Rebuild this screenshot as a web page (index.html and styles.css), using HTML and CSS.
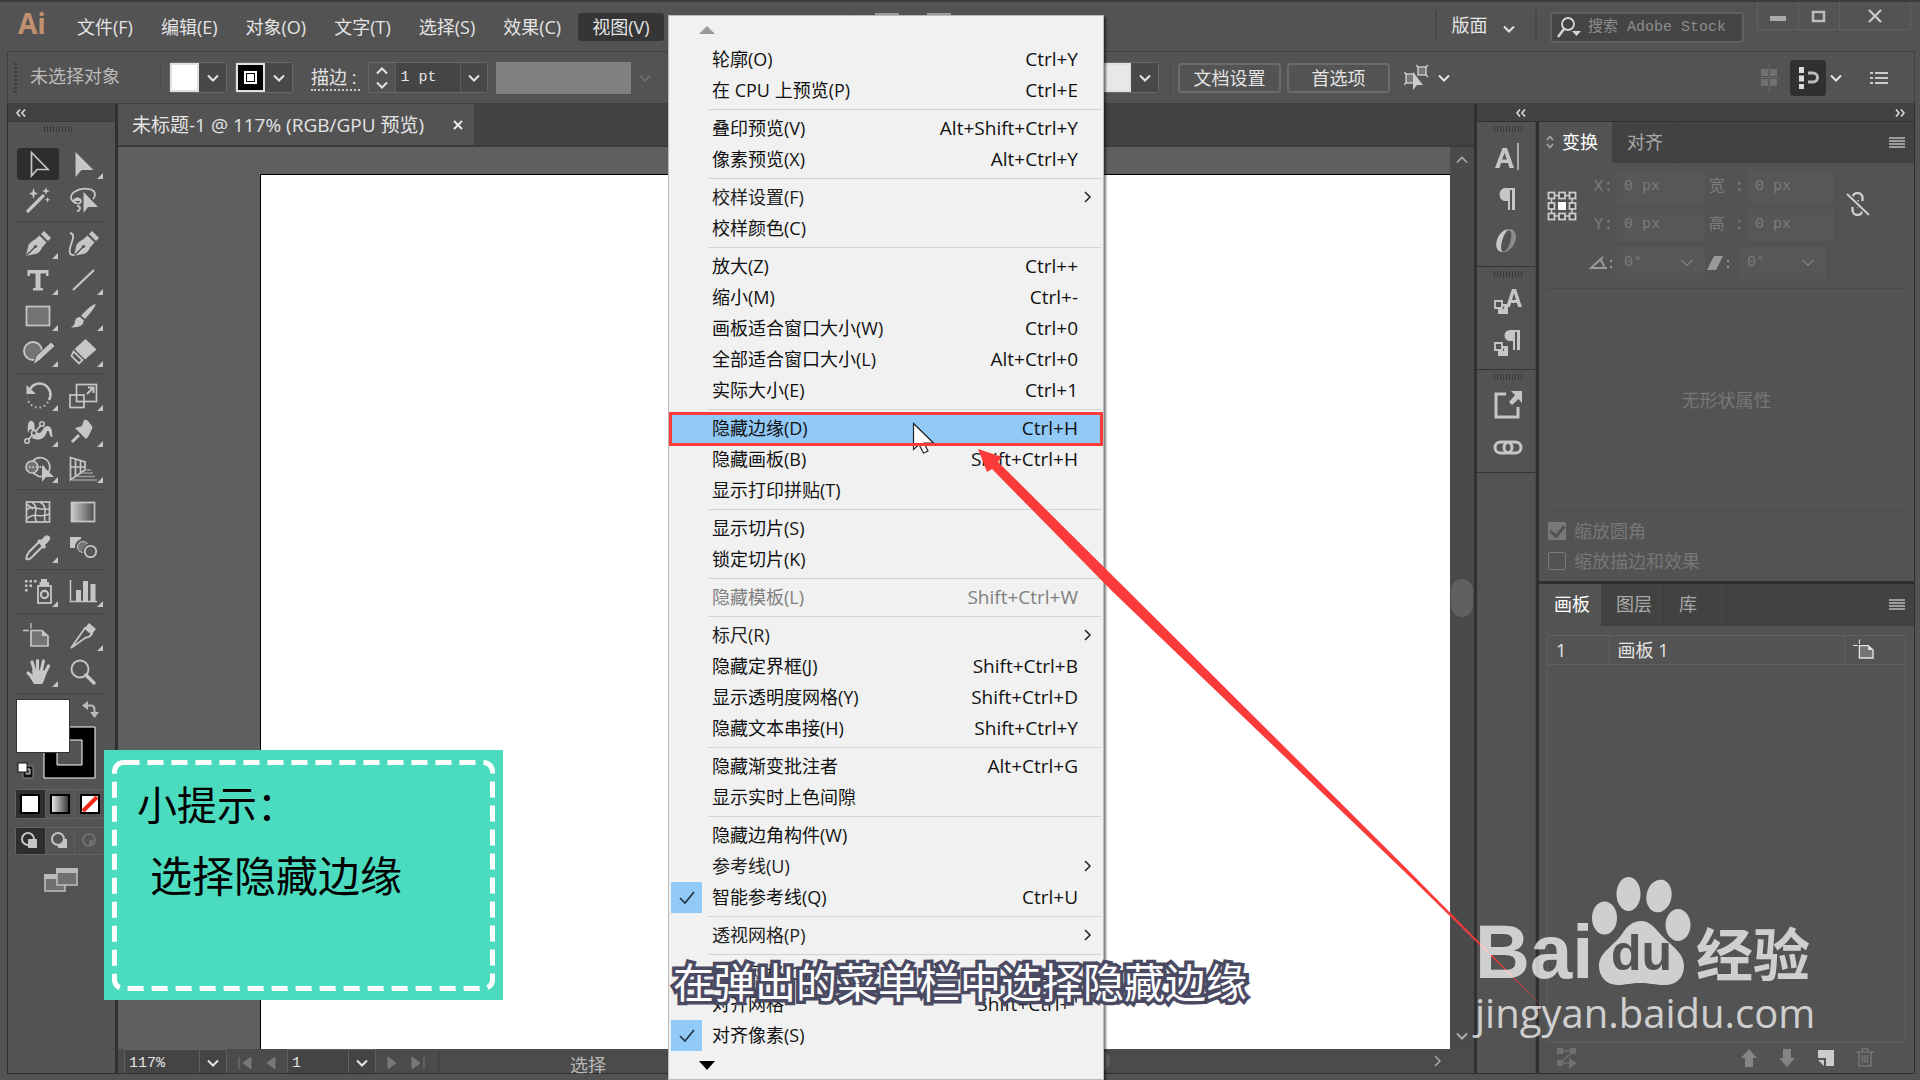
FILE: index.html
```html
<!DOCTYPE html>
<html lang="zh-CN">
<head>
<meta charset="utf-8">
<title>Ai</title>
<link rel="stylesheet" href="styles.css">
</head>
<body>
<svg class="defs" aria-hidden="true">
  <symbol id="chev" viewBox="0 0 12 8"><path d="M1 1.500L6 6.500L11 1.500" fill="none" stroke="currentColor" stroke-width="2"/></symbol>
  <symbol id="chev-right" viewBox="0 0 8 12"><path d="M1 1L6 6L1 11" fill="none" stroke="currentColor" stroke-width="1.500"/></symbol>
  <symbol id="dbl" viewBox="0 0 10 8"><path d="M4 0.500L1 4L4 7.500M9 0.500L6 4L9 7.500" fill="none" stroke="currentColor" stroke-width="1.600"/></symbol>
  <symbol id="list" viewBox="0 0 16 12"><path d="M0 1H16M0 4H16M0 7H16M0 10H16" stroke="currentColor" stroke-width="1.500"/></symbol>
  <symbol id="check" viewBox="0 0 16 14"><path d="M1 7L6 12L15 1" fill="none" stroke="currentColor" stroke-width="1.700"/></symbol>
  <symbol id="nib" viewBox="0 0 30 30"><path d="M3 27L5.500 16Q7 13 12 10.500L16.500 6.500L23.500 13.500L19.500 18Q17 23 14 24.500Z" fill="currentColor"/><path d="M18 5L21 2L28 9L25 12Z" fill="currentColor"/><path d="M3.500 26.500L12 18" stroke="#535353" stroke-width="1.500"/><circle cx="12.500" cy="17.500" r="1.600" fill="#535353"/></symbol>
  <symbol id="board" viewBox="0 0 30 30"><path d="M8 9.500H19L25 15V25H8Z" fill="#757575" stroke="currentColor" stroke-width="1.700"/><path d="M19 9V15H25Z" fill="currentColor"/><path d="M0 9.500H6M8 2V7.500" stroke="currentColor" stroke-width="1.300"/></symbol>
</svg>
<div class="app">
  <header class="titlebar">
    <span class="logo">Ai</span>
    <nav class="menubar">
      <button>文件(F)</button><button>编辑(E)</button><button>对象(O)</button><button>文字(T)</button><button>选择(S)</button><button>效果(C)</button><button class="open">视图(V)</button>
    </nav>
    <div class="behind" aria-hidden="true"><i></i><b></b><b></b></div>
    <button class="layout-switch">版面<svg width="12" height="8"><use href="#chev"/></svg></button>
    <label class="search">
      <svg width="26" height="26" viewBox="0 0 26 26"><circle cx="12" cy="9" r="6" fill="none" stroke="#d5d5d5" stroke-width="1.800"/><path d="M8 14L2 22" stroke="#d5d5d5" stroke-width="2.500"/><path d="M16 16H25L20.500 21Z" fill="#d5d5d5"/></svg>
      <input type="text" placeholder="搜索 Adobe Stock" aria-label="搜索">
    </label>
    <div class="wincontrols">
      <button aria-label="最小化"><svg width="16" height="14"><path d="M0 7H16V12H0Z" fill="#aaa"/></svg></button>
      <button aria-label="最大化"><svg width="16" height="14"><rect x="2" y="3" width="11" height="9" fill="none" stroke="#bbb" stroke-width="2.500"/></svg></button>
      <button class="close" aria-label="关闭"><svg width="16" height="14"><path d="M2 1L14 13M14 1L2 13" stroke="#ccc" stroke-width="2.200"/></svg></button>
    </div>
  </header>

  <section class="controlbar">
    <i class="dots"></i>
    <span class="state">未选择对象</span>
    <button class="combo" aria-label="填色"><i class="sw white"></i><span class="arrow"><svg width="12" height="8"><use href="#chev"/></svg></span></button>
    <button class="combo" aria-label="描边颜色"><i class="sw black"></i><span class="arrow"><svg width="12" height="8"><use href="#chev"/></svg></span></button>
    <label class="stroke-label" for="weight">描边 :</label>
    <div class="stepper">
      <button class="spin" aria-label="步进"><svg width="12" height="8" viewBox="0 0 12 8"><path d="M1 6.500L6 1.500L11 6.500" fill="none" stroke="currentColor" stroke-width="2"/></svg><svg width="12" height="8"><use href="#chev"/></svg></button>
      <input id="weight" type="text" value="1 pt">
      <button class="arrow" aria-label="粗细"><svg width="12" height="8"><use href="#chev"/></svg></button>
    </div>
    <i class="profile"></i>
    <svg class="dimchev" width="12" height="8"><use href="#chev"/></svg>
    <div class="right-controls">
      <button class="combo style" aria-label="样式"><i class="sw pale"></i><span class="arrow"><svg width="12" height="8"><use href="#chev"/></svg></span></button>
      <i class="rule"></i>
      <button class="plain">文档设置</button>
      <button class="plain">首选项</button>
      <button class="ghost similar" aria-label="选择类似"><svg width="26" height="28" viewBox="0 0 26 28"><g fill="#777" stroke="#c4c4c4" stroke-width="1.500"><rect x="2" y="10" width="8" height="9"/><rect x="14" y="3" width="8" height="8"/></g><path d="M0 8l3 3M0 21l3-3M12 1l3 3M24 1l-3 3M24 13l-3-3" stroke="#c4c4c4" stroke-width="1.500"/><path d="M9 8V26L13 21H19Z" fill="#ccc"/></svg><svg width="12" height="8"><use href="#chev"/></svg></button>
    </div>
    <div class="snap">
      <svg width="22" height="30" viewBox="0 0 22 30"><g fill="#707070"><rect x="3" y="6" width="7" height="7"/><rect x="12" y="6" width="7" height="7"/><rect x="3" y="16" width="7" height="7"/><rect x="12" y="16" width="7" height="7"/></g><path d="M11 0V30M0 14.500H22" stroke="#666"/></svg>
      <button class="snap-on" aria-label="对齐"><svg width="24" height="24" viewBox="0 0 24 24"><path d="M5.500 1V23" stroke="#ddd" stroke-width="5" stroke-dasharray="6 2.500"/><path d="M12 7H17A4 4 0 0 1 17 16H12" fill="none" stroke="#bbb" stroke-width="3"/></svg></button>
      <svg width="12" height="8"><use href="#chev"/></svg>
      <button class="ghost options" aria-label="选项"><svg width="18" height="14" viewBox="0 0 18 14"><path d="M0 2H3M5 2H18M0 7H3M5 7H18M0 12H3M5 12H18" stroke="#ccc" stroke-width="2"/></svg></button>
    </div>
  </section>

  <main class="workspace">
    <aside class="toolbar">
      <div class="dockhead"><svg width="10" height="8"><use href="#dbl"/></svg></div>
      <i class="grip"></i>
      <div class="tools">
        <button class="tool on" aria-label="选择"><svg viewBox="0 0 30 30"><path d="M8.500 3.500V27L14 20.500H25Z" fill="none" stroke="currentColor" stroke-width="1.700"/></svg></button>
        <button class="tool more" aria-label="直接选择"><svg viewBox="0 0 30 30"><path d="M7.500 3V28L13.500 21H25.500Z" fill="currentColor"/></svg></button>
        <button class="tool" aria-label="魔棒"><svg viewBox="0 0 30 30"><path d="M5 26L20 11" stroke="currentColor" stroke-width="3.200" stroke-linecap="round"/><path d="M10.500 3l1.300 4.200L15 8.500l-3.200 1.300L10.500 14l-1.300-4.200L6 8.500l3.200-1.300ZM23 2l1 3 3 1-3 1-1 3-1-3-3-1 3-1ZM24.500 12l.8 2 2 .8-2 .8-.8 2-.8-2-2-.8 2-.8Z" fill="currentColor"/></svg></button>
        <button class="tool" aria-label="套索"><svg viewBox="0 0 30 30"><path d="M9 18C2 17 1 10 7 6.500C14 2 27 3 27 9.500C27 12 26 13 25 14M9 18C5 19 5 14 9 13.500C14 13 14 19 9.500 18.500M9 21C13 21 13 25 9 26.500M6 15h7" fill="none" stroke="currentColor" stroke-width="1.800"/><path d="M15.500 7V28L20 22H30Z" fill="currentColor"/></svg></button>
      </div>
      <div class="tools">
        <button class="tool more" aria-label="钢笔"><svg viewBox="0 0 30 30"><use href="#nib"/></svg></button>
        <button class="tool" aria-label="曲率"><svg viewBox="0 0 30 30"><path d="M2 4C8 5 4 12 2.500 17C1 23 1 27 7 26" fill="none" stroke="currentColor" stroke-width="1.800"/><use href="#nib" x="3"/></svg></button>
        <button class="tool more" aria-label="文字"><svg viewBox="0 0 30 30"><path d="M4.500 5H25.500V11H23V8.500H17.500V23H20V25.500H10V23H12.500V8.500H7V11H4.500Z" fill="currentColor"/></svg></button>
        <button class="tool more" aria-label="直线"><svg viewBox="0 0 30 30"><path d="M5 25L26 5" stroke="currentColor" stroke-width="2.200"/></svg></button>
        <button class="tool more" aria-label="矩形"><svg viewBox="0 0 30 30"><rect x="3.500" y="5.500" width="23" height="19" fill="#747474" stroke="currentColor" stroke-width="1.700"/></svg></button>
        <button class="tool more" aria-label="画笔"><svg viewBox="0 0 30 30"><path d="M27.500 3Q28 6 17 18L13 14.500Q24 3 27.500 3ZM12 16L16 19.500Q15 27 3 26.500Q7 24 7 20Q8 16 12 16Z" fill="currentColor"/></svg></button>
        <button class="tool more" aria-label="Shaper"><svg viewBox="0 0 30 30"><circle cx="10" cy="14" r="9" fill="#747474" stroke="currentColor" stroke-width="1.900"/><path d="M10 28L13 19L28 5L32 9L17 23Z" fill="currentColor" stroke="#535353"/></svg></button>
        <button class="tool more" aria-label="橡皮擦"><svg viewBox="0 0 30 30"><path d="M17.500 2L28.500 12.500L17 22.500L6.500 12Z" fill="currentColor"/><path d="M5.500 14.500L14.500 23L11 26.500L3.500 19Z" fill="none" stroke="currentColor" stroke-width="1.800"/></svg></button>
      </div>
      <div class="tools">
        <button class="tool more" aria-label="旋转"><svg viewBox="0 0 30 30"><path d="M7 8A10.500 10.500 0 0 1 26 19" fill="none" stroke="currentColor" stroke-width="2.500"/><path d="M3.500 4V13H13Z" fill="currentColor"/><path d="M25 21A11 11 0 0 1 4.500 17" fill="none" stroke="currentColor" stroke-width="2" stroke-dasharray="1.500 3"/></svg></button>
        <button class="tool more" aria-label="比例缩放"><svg viewBox="0 0 30 30"><rect x="8.500" y="3.500" width="20" height="17" fill="none" stroke="currentColor" stroke-width="1.700"/><rect x="2" y="14" width="14" height="12.500" fill="none" stroke="currentColor" stroke-width="1.700"/><path d="M19 13L25 7M20 6.500H25.500V12" fill="none" stroke="currentColor" stroke-width="2"/></svg></button>
        <button class="tool more" aria-label="宽度"><svg viewBox="0 0 30 30"><path d="M5 16C4 6 6 3 9 4C14 6 9 14 15 16C20 17 19 9 25 9C31 11 28 18 30 20C25 20 28 13 24 14C22 23 15 24 9 21C12 14 8 8 5 16Z" fill="currentColor"/><path d="M5 23L19 7" stroke="currentColor" stroke-width="1.800"/><g fill="#535353" stroke="currentColor" stroke-width="1.600"><circle cx="4" cy="24" r="2.200"/><circle cx="11" cy="16" r="2.500"/><circle cx="19" cy="7" r="2.200"/></g></svg></button>
        <button class="tool more" aria-label="操控变形"><svg viewBox="0 0 30 30"><path d="M16 3Q18 2 20 4L24 9Q25 11 23.500 13L20 20L18 22L13 17L9 13L7 11L14 9Z" fill="currentColor"/><path d="M11 18L4 25" stroke="currentColor" stroke-width="3"/></svg></button>
        <button class="tool more" aria-label="形状生成器"><svg viewBox="0 0 30 30"><circle cx="9" cy="14" r="6" fill="#747474" stroke="currentColor" stroke-width="1.700"/><path d="M10 8A9.500 9.500 0 1 1 16 23.500L10 20" fill="none" stroke="currentColor" stroke-width="1.700"/><path d="M6 14H22" stroke="currentColor" stroke-width="2" stroke-dasharray="1.500 2"/><path d="M19 12V29L23 24H31Z" fill="currentColor"/></svg></button>
        <button class="tool more" aria-label="透视网格"><svg viewBox="0 0 30 30"><path d="M2.500 4.500L17 9V17L2.500 27ZM7.500 6V24M12.500 7.500V20M2.500 14H17" fill="none" stroke="currentColor" stroke-width="1.700"/><path d="M17 17H23M13 20H25M9 23.500H27M4 27H29" stroke="#999" stroke-width="1.500"/></svg></button>
      </div>
      <div class="tools">
        <button class="tool" aria-label="网格"><svg viewBox="0 0 30 30"><rect x="3.500" y="5" width="23" height="20" fill="none" stroke="currentColor" stroke-width="1.700"/><path d="M3.500 13C10 7 14 14 26 12M3.500 22C12 14 17 22 26 17M9 5C18 12 8 18 14 25M17 5C26 10 20 18 22 25M3.500 7L10 12" fill="none" stroke="currentColor" stroke-width="1.600"/></svg></button>
        <button class="tool" aria-label="渐变"><svg viewBox="0 0 30 30"><defs><linearGradient id="gr"><stop stop-color="#ccc"/><stop offset="1" stop-color="#4c4c4c"/></linearGradient></defs><rect x="3.500" y="5.500" width="23" height="19" fill="url(#gr)" stroke="currentColor" stroke-width="1.700"/></svg></button>
        <button class="tool more" aria-label="吸管"><svg viewBox="0 0 30 30"><path d="M16 9L6 19Q3 23 3.500 26Q7 27 10 23L20 13" fill="none" stroke="currentColor" stroke-width="2"/><path d="M14 8L17 6L18 7L22 3Q25 1 27 4Q28 6 25 9L22 12L23 14L21 16Z" fill="currentColor"/></svg></button>
        <button class="tool" aria-label="混合"><svg viewBox="0 0 30 30"><path d="M2 4H13V15H2Z" fill="currentColor"/><circle cx="15" cy="14" r="6.500" fill="#777" stroke="#535353" stroke-width="3"/><circle cx="15" cy="14" r="5.500" fill="#777" stroke="currentColor"/><circle cx="22.500" cy="18.500" r="6" fill="#555" stroke="#535353" stroke-width="4"/><circle cx="22.500" cy="18.500" r="5.700" fill="none" stroke="currentColor" stroke-width="1.800"/></svg></button>
      </div>
      <div class="tools">
        <button class="tool more" aria-label="符号喷枪"><svg viewBox="0 0 30 30"><path d="M2 3h2.500v2.500H2zM6.500 3H9v2.500H6.500zM11 3h2.500v2.500H11zM2 7.500h2.500V10H2zM6.500 7.500H9V10H6.500zM2 12h2.500v2.500H2z" fill="currentColor"/><rect x="15" y="9" width="13" height="17" fill="none" stroke="currentColor" stroke-width="1.800"/><path d="M16.500 9V5H18V2H24V5H26V9Z" fill="currentColor"/><circle cx="21.500" cy="17.500" r="3.600" fill="none" stroke="currentColor" stroke-width="2.200"/></svg></button>
        <button class="tool more" aria-label="柱形图"><svg viewBox="0 0 30 30"><path d="M2.500 3V24.500H29" fill="none" stroke="currentColor" stroke-width="1.500"/><path d="M8 13H13V24H8ZM15 4H20V24H15ZM22.500 7H27.500V24H22.500Z" fill="currentColor"/></svg></button>
      </div>
      <div class="tools">
        <button class="tool" aria-label="画板"><svg viewBox="0 0 30 30"><use href="#board"/></svg></button>
        <button class="tool more" aria-label="切片"><svg viewBox="0 0 30 30"><path d="M17 7L24 13Q22 16 17 17L3 27Z" fill="none" stroke="currentColor" stroke-width="1.800"/><path d="M17 7L21 2L28 8L24 13Z" fill="currentColor"/></svg></button>
        <button class="tool more" aria-label="抓手"><svg viewBox="0 0 30 30"><path d="M9 5L12 15M14.500 3.500V15M20.500 4L18 15M25.500 9L21 18M5 16L12 22" stroke="currentColor" stroke-width="3.200" stroke-linecap="round"/><path d="M9 13H21L23 17Q21 25 19 27H11L6 19L10 20Z" fill="currentColor"/></svg></button>
        <button class="tool" aria-label="缩放"><svg viewBox="0 0 30 30"><circle cx="12" cy="12" r="8.500" fill="none" stroke="currentColor" stroke-width="1.900"/><path d="M18 18L26 26" stroke="currentColor" stroke-width="3.500" stroke-linecap="round"/></svg></button>
      </div>
      <svg class="fillstroke" width="90" height="90" viewBox="0 0 90 90"><path d="M29 29H80V80H29Z" fill="#000" stroke="#fff"/><path d="M42 42H67V67H42Z" fill="#535353" stroke="#fff"/><rect x="1.500" y="1.500" width="53" height="53" fill="#fff" stroke="#333"/><path d="M72 7.500H76Q79.500 7.500 79.500 12V14" fill="none" stroke="#bbb" stroke-width="2"/><path d="M67 7.500L73 3V12ZM75 14H84L79.500 20Z" fill="#bbb"/><path d="M8 68H18V80H8Z" fill="#111" stroke="#888"/><path d="M11 71H15V76H11Z" fill="#555" stroke="#ccc"/><rect x="3" y="65" width="9" height="9" fill="#fff" stroke="#111"/></svg>
      <div class="modes">
        <button class="on" aria-label="颜色"><svg width="20" height="20"><rect x="1" y="1" width="18" height="18" fill="#fff" stroke="#000" stroke-width="2"/></svg></button>
        <button aria-label="渐变填充"><svg width="20" height="20"><defs><linearGradient id="g2"><stop stop-color="#eee"/><stop offset="1" stop-color="#333"/></linearGradient></defs><rect x="1" y="1" width="18" height="18" fill="url(#g2)" stroke="#000" stroke-width="2"/></svg></button>
        <button aria-label="无"><svg width="20" height="20"><rect x="1" y="1" width="18" height="18" fill="#fff" stroke="#000" stroke-width="2"/><path d="M3 17L17 3" stroke="#f02818" stroke-width="4"/></svg></button>
      </div>
      <div class="modes draw">
        <button class="on" aria-label="正常绘图"><svg width="18" height="18"><circle cx="7" cy="7" r="6" fill="none" stroke="#c4c4c4" stroke-width="2"/><rect x="7" y="7" width="9" height="9" fill="#c4c4c4"/></svg></button>
        <button aria-label="背面绘图"><svg width="18" height="18"><rect x="7" y="7" width="9" height="9" fill="#c4c4c4"/><circle cx="7" cy="7" r="6" fill="#555" stroke="#c4c4c4" stroke-width="2"/></svg></button>
        <button aria-label="内部绘图"><svg width="18" height="18"><circle cx="8" cy="8" r="6" fill="none" stroke="#707070" stroke-width="2"/><path d="M8 8H13L11 13H8Z" fill="#707070"/></svg></button>
      </div>
      <button class="screenmode" aria-label="屏幕模式"><svg width="36" height="26" viewBox="0 0 36 26"><rect x="2" y="8" width="20" height="16" fill="#707070" stroke="#bbb" stroke-width="1.600"/><path d="M1 7H14V12H1Z" fill="#bbb"/><rect x="14" y="2" width="20" height="16" fill="#707070" stroke="#bbb" stroke-width="1.600"/><path d="M13 1H35V6H13Z" fill="#bbb"/></svg></button>
    </aside>

    <section class="document">
      <div class="doctabs"><button class="doctab">未标题-1 @ 117% (RGB/GPU 预览)<svg width="10" height="10"><path d="M1 1L9 9M9 1L1 9" stroke="#eee" stroke-width="1.800"/></svg></button></div>
      <div class="view">
        <div class="canvas"><div class="artboard"></div></div>
        <div class="vscroll"><svg width="12" height="8" viewBox="0 0 12 8"><path d="M1 6.500L6 1.500L11 6.500" fill="none" stroke="currentColor" stroke-width="1.700"/></svg><i></i><svg width="12" height="8"><use href="#chev"/></svg></div>
      </div>
      <footer class="statusbar">
        <div class="field"><input type="text" value="117%" aria-label="缩放比例"><button aria-label="缩放列表"><svg width="12" height="8"><use href="#chev"/></svg></button></div>
        <svg class="nav" width="40" height="16"><path d="M2 2V14M14 2L6 8L14 14ZM38 2L30 8L38 14Z" fill="#787878" stroke="#787878"/></svg>
        <div class="field board"><input type="text" value="1" aria-label="画板编号"><button aria-label="画板列表"><svg width="12" height="8"><use href="#chev"/></svg></button></div>
        <svg class="nav" width="40" height="16"><path d="M2 2L10 8L2 14ZM26 2L34 8L26 14ZM38 2V14" fill="#787878" stroke="#787878"/></svg>
        <i class="rule"></i>
        <span class="hint">选择</span>
        <div class="hscroll"><i></i><svg width="8" height="12"><use href="#chev-right"/></svg></div>
      </footer>
    </section>

    <section class="docks">
      <div class="dockhead"><svg width="10" height="8"><use href="#dbl"/></svg><svg class="flip" width="10" height="8"><use href="#dbl"/></svg></div>
      <div class="dockrow">
        <aside class="icondock">
          <div class="group"><i class="grip"></i>
            <button aria-label="字符"><svg viewBox="0 0 30 30"><path d="M2 26L9.500 6H14L21 26H16.500L15 21H8L6.500 26ZM9.200 17.500H13.800L11.500 11Z" fill="currentColor"/><path d="M25 1V28" stroke="currentColor" stroke-width="1.500"/></svg></button>
            <button aria-label="段落"><svg viewBox="0 0 30 30"><path d="M22 4H11A7 7 0 0 0 11 17H15V26H17V6H19V26H22Z" fill="currentColor"/></svg></button>
            <button aria-label="OpenType"><svg viewBox="0 0 30 30"><defs><linearGradient id="og"><stop offset=".45" stop-color="#c8c8c8"/><stop offset=".6" stop-color="#8c8c8c"/></linearGradient></defs><path d="M17 3C6 2 -1 20 6 25C16 31 29 12 20 4Q19 3 17 3ZM16 4.500C19 5 19 9 17 17C14 26 10 27 9 25C6 22 11 4 16 4.500Z" fill="url(#og)"/></svg></button>
          </div>
          <div class="group"><i class="grip"></i>
            <button aria-label="字符样式"><svg viewBox="0 0 30 30"><path d="M13 20L19 2H23L29 20H25L24 16H18L17 20ZM19 13H23L21 6Z" fill="currentColor"/><path d="M5 17H15V27H5Z" fill="currentColor"/><path d="M2 14H9V21H2ZM12 18V23H7" fill="#535353" stroke="currentColor" stroke-width="1.800"/></svg></button>
            <button aria-label="段落样式"><svg viewBox="0 0 30 30"><path d="M27 1H17A5.500 5.500 0 0 0 17 12H20V21H22V3H24V21H27Z" fill="currentColor"/><path d="M5 17H15V27H5Z" fill="currentColor"/><path d="M2 14H9V21H2ZM12 18V23H7" fill="#535353" stroke="currentColor" stroke-width="1.800"/></svg></button>
          </div>
          <div class="group"><i class="grip"></i>
            <button aria-label="资源导出"><svg viewBox="0 0 30 30"><path d="M13 4H3V27H25V17" fill="none" stroke="currentColor" stroke-width="3"/><path d="M18 1H29V13L25.500 9L19 15L16 12L22 5Z" fill="currentColor"/></svg></button>
            <button aria-label="链接"><svg viewBox="0 0 30 30"><rect x="2" y="10" width="17" height="11" rx="5.500" fill="none" stroke="currentColor" stroke-width="3"/><rect x="11" y="10" width="17" height="11" rx="5.500" fill="none" stroke="currentColor" stroke-width="3"/></svg></button>
          </div>
        </aside>
        <div class="panels">
          <section class="panel transform">
            <div class="tabs"><button class="active"><svg width="8" height="14"><path d="M1 5L4 1.500L7 5M1 9L4 12.500L7 9" fill="none" stroke="#aaa" stroke-width="1.500"/></svg>变换</button><button>对齐</button><svg class="pmenu" width="16" height="12"><use href="#list"/></svg></div>
            <div class="xform">
              <svg class="refpoint" width="30" height="30" viewBox="0 0 30 30"><path d="M8 4.500H22M8 25H22M4.500 8V22M25 8V22" stroke="#ccc" stroke-width="1.500"/><g fill="#484848" stroke="#ccc" stroke-width="1.800"><rect x="1.500" y="1.500" width="6" height="6"/><rect x="12" y="1.500" width="6" height="6"/><rect x="22.500" y="1.500" width="6" height="6"/><rect x="1.500" y="12" width="6" height="6"/><rect x="22.500" y="12" width="6" height="6"/><rect x="1.500" y="22.500" width="6" height="6"/><rect x="12" y="22.500" width="6" height="6"/><rect x="22.500" y="22.500" width="6" height="6"/></g><path d="M11 11H19V19H11Z" fill="#fff"/></svg>
              <div class="fields">
                <label for="fx">X:</label><input id="fx" value="0 px" disabled><label for="fw">宽 :</label><input id="fw" value="0 px" disabled>
                <label for="fy">Y:</label><input id="fy" value="0 px" disabled><label for="fh">高 :</label><input id="fh" value="0 px" disabled>
                <label for="fa"><svg width="24" height="16"><path d="M14 2L2 13H18M11 5Q15 8 15 13" fill="none" stroke="#999" stroke-width="2"/><path d="M21 5h2v2h-2zM21 11h2v2h-2z" fill="#999"/></svg></label><select id="fa" disabled><option>0°</option></select>
                <label for="fs" class="shear"><svg width="24" height="16"><path d="M7 1H16L9 15H0Z" fill="#999"/><path d="M20 5h2v2h-2zM20 11h2v2h-2z" fill="#999"/></svg></label><select id="fs" disabled><option>0°</option></select>
              </div>
              <svg class="chain" width="24" height="26" viewBox="0 0 24 26"><rect x="6.500" y="2" width="10" height="22" rx="5" fill="none" stroke="#ccc" stroke-width="2.400"/><path d="M6 10V16M17 10V16" stroke="#535353" stroke-width="4"/><path d="M12 9V17" stroke="#ccc" stroke-width="2"/><path d="M1 3L23 24" stroke="#535353" stroke-width="5"/><path d="M1 3L23 24" stroke="#ccc" stroke-width="2"/></svg>
            </div>
            <p class="empty">无形状属性</p>
            <div class="checks">
              <label><input type="checkbox" checked disabled>缩放圆角</label>
              <label><input type="checkbox" disabled>缩放描边和效果</label>
            </div>
          </section>
          <section class="panel boards">
            <div class="tabs"><button class="active">画板</button><button>图层</button><button>库</button><svg class="pmenu" width="16" height="12"><use href="#list"/></svg></div>
            <div class="listbox">
              <table><tr><td class="num">1</td><td>画板 1</td><td class="ico"><svg width="24" height="24" viewBox="0 0 30 30"><use href="#board"/></svg></td></tr></table>
            </div>
            <div class="panelfoot">
              <svg width="20" height="22" viewBox="0 0 20 22"><path d="M1 4H17L3 16H17" fill="none" stroke="#707070" stroke-width="1.500"/><path d="M0 1H6V7H0ZM13 1H19V7H13ZM0 13H6V19H0ZM12 11L20 16L12 22Z" fill="#707070"/></svg>
              <span class="spacer"></span>
              <svg width="16" height="18"><path d="M8 0L16 9H12V18H4V9H0Z" fill="#858585"/></svg>
              <svg width="16" height="18"><path d="M8 18L16 9H12V0H4V9H0Z" fill="#858585"/></svg>
              <svg width="17" height="18"><path d="M1 1H17V17H9V9H1Z" fill="#ccc"/><path d="M1 11H7V17Z" fill="#ccc"/></svg>
              <svg width="18" height="20"><path d="M0 4H18M6 4V1H12V4M3 4V18H15V4M6.500 7V15M9 7V15M11.500 7V15" fill="none" stroke="#757575" stroke-width="1.500"/></svg>
            </div>
          </section>
        </div>
      </div>
    </section>
  </main>
</div>

<div class="dropdown" role="menu">
  <svg class="scroll-up" width="16" height="8"><path d="M0 8L8 0L16 8Z" fill="#999"/></svg>
  <ul>
    <li><button>轮廓(O)<kbd>Ctrl+Y</kbd></button></li>
    <li><button>在 CPU 上预览(P)<kbd>Ctrl+E</kbd></button></li>
    <li class="sep"></li>
    <li><button>叠印预览(V)<kbd>Alt+Shift+Ctrl+Y</kbd></button></li>
    <li><button>像素预览(X)<kbd>Alt+Ctrl+Y</kbd></button></li>
    <li class="sep"></li>
    <li><button class="sub">校样设置(F)<svg width="8" height="12"><use href="#chev-right"/></svg></button></li>
    <li><button>校样颜色(C)</button></li>
    <li class="sep"></li>
    <li><button>放大(Z)<kbd>Ctrl++</kbd></button></li>
    <li><button>缩小(M)<kbd>Ctrl+-</kbd></button></li>
    <li><button>画板适合窗口大小(W)<kbd>Ctrl+0</kbd></button></li>
    <li><button>全部适合窗口大小(L)<kbd>Alt+Ctrl+0</kbd></button></li>
    <li><button>实际大小(E)<kbd>Ctrl+1</kbd></button></li>
    <li class="sep"></li>
    <li><button class="hover">隐藏边缘(D)<kbd>Ctrl+H</kbd></button></li>
    <li><button>隐藏画板(B)<kbd>Shift+Ctrl+H</kbd></button></li>
    <li><button>显示打印拼贴(T)</button></li>
    <li class="sep"></li>
    <li><button>显示切片(S)</button></li>
    <li><button>锁定切片(K)</button></li>
    <li class="sep"></li>
    <li><button disabled>隐藏模板(L)<kbd>Shift+Ctrl+W</kbd></button></li>
    <li class="sep"></li>
    <li><button class="sub">标尺(R)<svg width="8" height="12"><use href="#chev-right"/></svg></button></li>
    <li><button>隐藏定界框(J)<kbd>Shift+Ctrl+B</kbd></button></li>
    <li><button>显示透明度网格(Y)<kbd>Shift+Ctrl+D</kbd></button></li>
    <li><button>隐藏文本串接(H)<kbd>Shift+Ctrl+Y</kbd></button></li>
    <li class="sep"></li>
    <li><button>隐藏渐变批注者<kbd>Alt+Ctrl+G</kbd></button></li>
    <li><button>显示实时上色间隙</button></li>
    <li class="sep"></li>
    <li><button>隐藏边角构件(W)</button></li>
    <li><button class="sub">参考线(U)<svg width="8" height="12"><use href="#chev-right"/></svg></button></li>
    <li class="checked"><span><svg width="16" height="14"><use href="#check"/></svg></span><button>智能参考线(Q)<kbd>Ctrl+U</kbd></button></li>
    <li class="sep"></li>
    <li><button class="sub">透视网格(P)<svg width="8" height="12"><use href="#chev-right"/></svg></button></li>
    <li class="sep"></li>
    <li><button>显示网格(G)<kbd>Ctrl+"</kbd></button></li>
    <li><button>对齐网格<kbd>Shift+Ctrl+"</kbd></button></li>
    <li class="checked"><span><svg width="16" height="14"><use href="#check"/></svg></span><button>对齐像素(S)</button></li>
  </ul>
  <svg class="scroll-down" width="16" height="9"><path d="M0 0H16L8 9Z" fill="#000"/></svg>
</div>

<svg class="annotation" viewBox="0 0 1920 1080" aria-hidden="true">
  <path d="M913.500 423.500V449.500L919 444.500L923.500 453L928 451L924 443H933.500Z" fill="#fff" stroke="#222" stroke-width="1.200"/>
  <rect x="670.500" y="413.500" width="431" height="31" fill="none" stroke="#fb3a3a" stroke-width="3"/>
  <path d="M978 449L1002 457L998 462L1120 583L1411 873L1544 1008L1408 875L1112 591L992 469L987 472Z" fill="#fb3a3a"/>
</svg>

<div class="tip">
  <svg aria-hidden="true" viewBox="0 0 399 250"><rect x="10.500" y="12.500" width="378" height="226" rx="9" fill="none" stroke="#fff" stroke-width="5" stroke-dasharray="16 8"/></svg>
  <p class="tip-title">小提示：</p>
  <p class="tip-body">选择隐藏边缘</p>
</div>

<p class="caption">在弹出的菜单栏中选择隐藏边缘</p>

<div class="watermark">
  <div class="brand">
    <span class="bai">Bai</span>
    <span class="paw"><svg viewBox="0 0 102 110" aria-hidden="true"><path d="M51 45C60 45 65 52 72 60C82 70 94 77 94 90C94 102 86 109 75 109C65 109 60 107 50 107C41 107 35 109 28 109C16 109 9 100 9 90C9 76 23 71 32 58C37 50 43 45 51 45Z"/><ellipse cx="14.500" cy="42" rx="12.500" ry="16.500"/><ellipse cx="38.500" cy="18" rx="12" ry="17"/><ellipse cx="69" cy="20" rx="12.500" ry="16.500" transform="rotate(12 69 20)"/><ellipse cx="88" cy="49" rx="12.500" ry="16"/></svg><b>du</b></span>
    <span class="jy">经验</span>
  </div>
  <div class="url">jingyan.baidu.com</div>
</div>
</body>
</html>
```
FILE: styles.css
```css
* { box-sizing: border-box; }
body {
  margin: 0;
  overflow: hidden;
  position: relative;
  background: #535353;
  color: #e4e4e4;
  font: 18px/24px "Open Sans", "Noto Sans CJK SC", sans-serif;
}
button, input, select { margin: 0; padding: 0; border: 0; background: none; color: inherit; font: inherit; border-radius: 0; }
button { display: flex; align-items: center; justify-content: center; white-space: nowrap; }
p, ul { margin: 0; padding: 0; list-style: none; }
svg { display: block; flex: none; }
i, b { display: block; flex: none; }
.defs { position: absolute; width: 0; height: 0; }
input { font-family: "Liberation Mono", "Noto Sans CJK SC", monospace; font-size: 15px; }

.app { height: 100vh; display: flex; flex-direction: column; padding: 0 5px 6px 7px; border-top: 2px solid #3c3c3c; }

/* title bar */
.titlebar { height: 49px; flex: none; display: flex; align-items: flex-start; }
.logo { width: 56px; padding: 7px 0 0 11px; color: #c09070; font: bold 28px/28px "Open Sans", sans-serif; }
.menubar { display: flex; padding-top: 11px; }
.menubar button { height: 28px; padding: 0 14px; border-radius: 3px; }
.menubar .open { background: #353535; margin-left: 3px; }
.behind { flex: 1; display: flex; gap: 28px; padding: 11px 0 0 187px; }
.behind i { width: 1px; height: 8px; background: #424242; margin-right: -5px; }
.behind b { width: 24px; height: 8px; background: #999; }
.layout-switch { width: 102px; height: 30px; margin: 8px 13px 0 0; padding-right: 6px; gap: 15px; border-left: 2px solid #484848; border-right: 2px solid #484848; }
.layout-switch svg { margin-top: 8px; }
.search { width: 194px; height: 31px; margin-top: 10px; display: flex; align-items: center; padding-left: 4px; gap: 6px; background: #444; border: 2px solid #606060; border-radius: 4px; }
.search input { width: 150px; height: 24px; color: #999; }
.search input::placeholder { color: #8c8c8c; opacity: 1; }
.wincontrols { display: flex; margin: 0 4px 0 13px; height: 28px; border: 1px solid #606060; border-top: 0; }
.wincontrols button { width: 41px; border-right: 1px solid #606060; }
.wincontrols .close { width: 70px; border: 0; }

/* control bar */
.controlbar { height: 52px; flex: none; display: flex; align-items: center; border: 1px solid #404040; border-bottom: 0; padding-left: 6px; }
.dots { width: 3px; height: 30px; background: repeating-linear-gradient(#3c3c3c 0 2px, transparent 2px 4px); }
.state { width: 131px; margin: 0 8px 0 13px; color: #bbb; padding-bottom: 4px; white-space: nowrap; border-right: 1px solid #4b4b4b; }
.combo { width: 58px; height: 31px; border: 1px solid #686868; border-radius: 3px; margin-right: 8px; justify-content: flex-start; }
.sw { width: 29px; height: 29px; border: 2px solid #e0e0e0; }
.sw.white { background: #fff; }
.sw.pale { background: #e8e8e8; }
.sw.black { background: #000; display: flex; align-items: center; justify-content: center; }
.sw.black::after { content: ""; width: 11px; height: 11px; background: #fff; border: 1px solid #fff; outline: 1px solid #000; outline-offset: -3px; }
.combo .arrow { flex: 1; height: 29px; display: flex; align-items: center; justify-content: center; background: #484848; }
.stroke-label { margin: 0 8px 0 10px; width: 49px; white-space: nowrap; border-bottom: 2px dotted #ccc; }
.stepper { display: flex; height: 31px; width: 120px; border: 1px solid #686868; border-radius: 3px; }
.stepper .spin { width: 26px; flex-direction: column; gap: 6px; }
.stepper input { width: 66px; background: #454545; border: solid #5e5e5e; border-width: 0 1px; padding-left: 5px; }
.stepper .arrow { width: 27px; background: #484848; }
.profile { width: 135px; height: 32px; margin: 0 8px; background: #808080; }
.dimchev { color: #6c6c6c; }
.right-controls { display: flex; align-items: center; margin-left: 450px; }
.right-controls .rule { width: 1px; height: 36px; background: #4a4a4a; margin: 0 7px 0 3px; }
.plain { width: 103px; height: 30px; border: 2px solid #6b6b6b; border-radius: 4px; margin-right: 6px; }
.similar { gap: 8px; margin-left: 8px; }
.snap { margin-left: auto; margin-right: 26px; display: flex; align-items: center; }
.snap-on { width: 36px; height: 36px; border-radius: 3px; background: #303030; margin: 0 4px 0 10px; }
.options { margin-left: 28px; }

.workspace { flex: 1; min-height: 0; display: flex; border: 1px solid #303030; border-top-color: #404040; background: #303030; gap: 3px; }
.dockhead { height: 17px; background: #424242; display: flex; align-items: center; color: #ddd; }
.grip { width: 29px; height: 6px; background: repeating-linear-gradient(90deg, #383838 0 1px, transparent 1px 3px); }

/* tools */
.toolbar { width: 107px; flex: none; background: #535353; color: #c6c6c6; }
.toolbar .dockhead { padding-left: 8px; border-bottom: 1px solid #3a3a3a; height: 18px; }
.toolbar .grip { margin: 4px 0 14px 36px; }
.tools { display: grid; grid-template-columns: 45px 45px; margin: 0 7px 8px; }
.tools::after { content: ""; height: 1px; background: #474747; grid-column: 1 / 3; margin: 3px 0 -4px; }
.tool { height: 32px; margin: 2px; width: 42px; border-radius: 3px; position: relative; }
.tool svg { width: 30px; height: 30px; overflow: visible; }
.tool.on, .modes .on { background: #2e2e2e; }
.more::after { content: ""; position: absolute; right: 1px; bottom: 1px; border: 3px solid transparent; border-right-color: #c6c6c6; border-bottom-color: #c6c6c6; }
.fillstroke { margin-left: 7px; }
.modes { display: flex; margin: 1px 0 0 7px; height: 30px; width: 91px; border: 1px solid #636363; border-radius: 3px; }
.modes button { flex: 1; border-right: 1px solid #5d5d5d; }
.modes.draw { margin-top: 8px; height: 28px; }
.screenmode { margin: 12px 0 0 35px; }

/* document */
.document { flex: 1; min-width: 0; display: flex; flex-direction: column; background: #4b4b4b; }
.doctabs { height: 43px; background: #424242; border-bottom: 2px solid #3c3c3c; display: flex; flex: none; }
.doctab { width: 356px; background: #535353; justify-content: space-between; padding: 0 11px 0 14px; font-size: 19px; }
.view { flex: 1; min-height: 0; display: flex; }
.canvas { flex: 1; background: #5f5f5f; padding: 27px 0 0 142px; display: flex; }
.artboard { flex: 1; background: #fff; border: solid #000; border-width: 1px 0 0 1px; }
.vscroll { width: 24px; background: #4a4a4a; color: #aaa; display: flex; flex-direction: column; align-items: center; justify-content: space-between; padding: 9px 0; }
.vscroll i { width: 22px; height: 38px; border-radius: 11px; background: #606060; }
.statusbar { height: 24px; flex: none; display: flex; align-items: center; background: #4b4b4b; padding-left: 6px; }
.field { display: flex; height: 24px; border: 1px solid #606060; border-bottom: 0; width: 103px; background: #444; }
.field input { flex: 1; min-width: 0; padding: 4px 0 0 4px; }
.field button { width: 27px; border-left: 1px solid #606060; padding-top: 3px; }
.field.board { width: 89px; }
.nav { margin: 4px 10px 0; }
.statusbar .rule { width: 2px; height: 20px; background: #424242; margin-left: 2px; }
.hint { margin-left: 130px; color: #b8b8b8; flex: 1; padding-top: 7px; }
.hscroll { width: 370px; margin-right: 32px; display: flex; align-items: center; justify-content: space-between; color: #aaa; }
.hscroll i { width: 38px; height: 22px; border-radius: 11px; background: #626262; }

/* docks */
.docks { width: 437px; flex: none; display: flex; flex-direction: column; background: #303030; }
.docks .dockhead { justify-content: space-between; padding: 0 9px 0 39px; margin-bottom: 1px; }
.flip { transform: rotate(180deg); }
.dockrow { flex: 1; min-height: 0; display: flex; gap: 3px; }
.icondock { width: 59px; background: #535353; border-right: 1px solid #484848; color: #c6c6c6; }
.group { display: flex; flex-direction: column; align-items: center; border-bottom: 1px solid #333; padding: 4px 0 4px 4px; }
.group .grip { margin-bottom: 4px; }
.group button { width: 40px; height: 42px; }
.group svg { width: 30px; height: 30px; }
.panels { flex: 1; display: flex; flex-direction: column; gap: 3px; min-width: 0; }
.panel { background: #535353; display: flex; flex-direction: column; }
.tabs { height: 41px; background: #424242; display: flex; align-items: stretch; }
.tabs button { width: 63px; color: #a8a8a8; border-right: 1px solid #3c3c3c; justify-content: flex-start; padding: 0 0 2px 15px; }
.tabs .active { width: 62px; background: #535353; color: #fff; border: 0; }
.transform .active { width: 73px; gap: 8px; padding-left: 7px; }
.pmenu { color: #bbb; margin: auto 9px auto auto; }
.transform { height: 459px; }
.xform { display: flex; margin: 0 8px; padding: 8px 0 9px; border-bottom: 1px solid #4a4a4a; }
.refpoint { margin: 20px 14px 0 0; }
.fields { display: grid; grid-template-columns: 24px 88px 39px 86px; gap: 6px 2px; color: #7c7c7c; }
.fields label { align-self: center; justify-self: end; padding-right: 2px; font-family: "Liberation Mono", "Noto Sans CJK SC", monospace; font-size: 16px; white-space: nowrap; }
.fields .shear { justify-self: start; padding: 0; }
.fields input, .fields select { width: 100%; height: 32px; background: #575757; padding: 0 0 2px 7px; color: #7c7c7c; opacity: 1; }
.fields select { appearance: none; font: 15px "Liberation Mono", monospace; background-image: linear-gradient(45deg, transparent 45%, #7c7c7c 45% 60%, transparent 60%), linear-gradient(-45deg, transparent 45%, #7c7c7c 45% 60%, transparent 60%); background-size: 6px 6px; background-position: right 18px center, right 12px center; background-repeat: no-repeat; }
.fields .shear + select { width: 86px; margin-left: -8px; }
.chain { margin: 20px 0 0 12px; }
.empty { flex: 1; display: flex; align-items: center; justify-content: center; color: #777; margin: 0 8px; border-bottom: 1px solid #4a4a4a; }
.checks { padding: 8px 9px; display: grid; gap: 6px; color: #777; height: 70px; }
.checks label { display: flex; align-items: center; gap: 8px; height: 24px; }
.checks input { appearance: none; width: 18px; height: 18px; border: 1px solid #7a7a7a; border-radius: 2px; display: grid; place-items: center; }
.checks input:checked { background: #777; }
.checks input:checked::after { content: ""; width: 6px; height: 11px; border: solid #505050; border-width: 0 3px 3px 0; transform: rotate(40deg); margin-bottom: 3px; }
.boards { flex: 1; min-height: 0; }
.boards .tabs { height: 42px; }
.listbox { flex: 1; margin: 9px 8px 0; border: 1px solid #606060; border-radius: 3px; }
table { width: 100%; border-collapse: collapse; }
td { height: 28px; padding: 0 8px; border-bottom: 1px solid #606060; line-height: 24px; }
td + td { border-left: 1px solid #606060; }
.num { width: 61px; }
.ico { width: 61px; }
.panelfoot { height: 30px; padding: 0 40px 0 18px; display: flex; align-items: center; gap: 22px; }
.spacer { flex: 1; }

/* drop-down menu over the document */
.dropdown { position: absolute; left: 668px; top: 15px; width: 436px; height: 1065px; background: #f1f1f1; border: 1px solid #bbb; box-shadow: 2px 2px 2px rgba(0,0,0,.5); color: #111; }
.scroll-up { margin: 10px 0 10px 30px; }
.scroll-down { margin: 10px 0 0 30px; }
.dropdown li { height: 31px; position: relative; }
.dropdown li.sep { height: 7px; padding-top: 3px; }
.sep::after { content: ""; display: block; height: 1px; margin: 0 2px 0 39px; background: #d2d2d2; }
.dropdown button { width: 100%; height: 31px; padding: 0 25px 2px 43px; justify-content: space-between; }
.dropdown button.sub { padding-right: 11px; color: #222; }
.dropdown button:disabled { color: #808080; }
.dropdown .hover { background: #91c9f7; }
kbd { font: inherit; font-size: 19px; }
.checked span { position: absolute; left: 2px; top: 0; width: 31px; height: 31px; display: grid; place-items: center; background: #91c9f7; color: #234; }

/* annotations */
.annotation { position: absolute; left: 0; top: 0; width: 1920px; height: 1080px; }
.tip { position: absolute; left: 104px; top: 750px; width: 399px; height: 250px; background: #4bdcc0; color: #000; padding: 25px 0 0 33px; }
.tip svg { position: absolute; inset: 0; }
.tip-title { font: 40px/56px "Noto Sans CJK SC", sans-serif; }
.tip-body { font: 42px/60px "Noto Sans CJK SC", sans-serif; padding: 13px 0 0 13px; }
.caption { position: absolute; left: 673px; top: 950px; font: 41px/60px "Noto Sans CJK SC", sans-serif; color: #fff; white-space: nowrap; -webkit-text-stroke: 7px #4b4a63; paint-order: stroke fill; }
.watermark { position: absolute; left: 1475px; top: 876px; color: #fff; opacity: .72; }
.brand { display: flex; align-items: flex-end; height: 110px; }
.bai { width: 115px; font: bold 76px/68px "Liberation Sans", sans-serif; }
.paw { position: relative; width: 102px; height: 110px; }
.paw svg { fill: #fff; }
.paw b { position: absolute; left: 21px; bottom: 8px; color: #535353; font: bold 50px/50px "Liberation Sans", sans-serif; }
.jy { margin-left: 4px; font: bold 57px/70px "Noto Sans CJK SC", sans-serif; }
.url { font: 40px/48px "Open Sans", sans-serif; margin-top: 3px; }
```
